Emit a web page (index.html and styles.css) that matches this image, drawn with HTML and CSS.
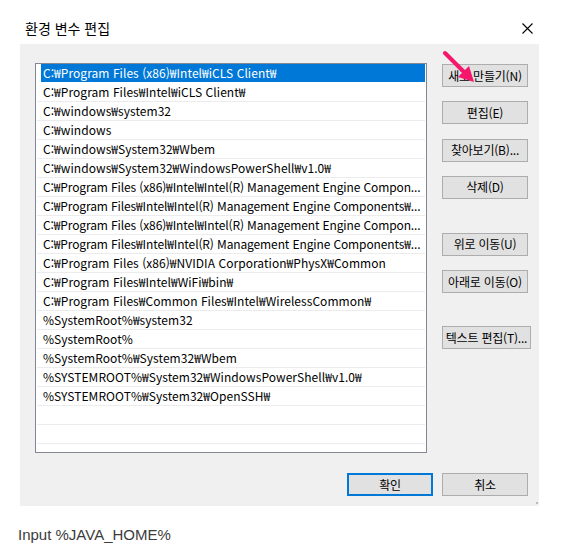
FILE: index.html
```html
<!DOCTYPE html>
<html lang="ko">
<head>
<meta charset="utf-8">
<link rel="stylesheet" href="styles.css">
</head>
<body>
<div class="page">
  <div class="titlebar">
    <span class="title">환경 변수 편집</span>
    <svg class="close" width="11" height="11" viewBox="0 0 11 11"><path d="M0.5 0.5 L10.5 10.5 M10.5 0.5 L0.5 10.5" stroke="#000" stroke-width="1.1" fill="none"/></svg>
  </div>
  <div class="panel">
    <div class="main">
      <div class="listbox">
        <div class="row selected">C:₩Program Files (x86)₩Intel₩iCLS Client₩</div>
        <div class="row">C:₩Program Files₩Intel₩iCLS Client₩</div>
        <div class="row">C:₩windows₩system32</div>
        <div class="row">C:₩windows</div>
        <div class="row">C:₩windows₩System32₩Wbem</div>
        <div class="row">C:₩windows₩System32₩WindowsPowerShell₩v1.0₩</div>
        <div class="row long">C:₩Program Files (x86)₩Intel₩Intel(R) Management Engine Compon...</div>
        <div class="row long">C:₩Program Files₩Intel₩Intel(R) Management Engine Components₩...</div>
        <div class="row long">C:₩Program Files (x86)₩Intel₩Intel(R) Management Engine Compon...</div>
        <div class="row long">C:₩Program Files₩Intel₩Intel(R) Management Engine Components₩...</div>
        <div class="row">C:₩Program Files (x86)₩NVIDIA Corporation₩PhysX₩Common</div>
        <div class="row">C:₩Program Files₩Intel₩WiFi₩bin₩</div>
        <div class="row">C:₩Program Files₩Common Files₩Intel₩WirelessCommon₩</div>
        <div class="row">%SystemRoot%₩system32</div>
        <div class="row">%SystemRoot%</div>
        <div class="row">%SystemRoot%₩System32₩Wbem</div>
        <div class="row">%SYSTEMROOT%₩System32₩WindowsPowerShell₩v1.0₩</div>
        <div class="row">%SYSTEMROOT%₩System32₩OpenSSH₩</div>
        <div class="row"></div>
        <div class="row"></div>
      </div>
      <div class="actions">
        <div class="group">
          <button class="btn new">새로 만들기(N)</button>
          <button class="btn">편집(E)</button>
          <button class="btn">찾아보기(B)...</button>
          <button class="btn">삭제(D)</button>
        </div>
        <div class="group">
          <button class="btn">위로 이동(U)</button>
          <button class="btn">아래로 이동(O)</button>
        </div>
        <div class="group">
          <button class="btn wide">텍스트 편집(T)...</button>
        </div>
        <svg class="arrow" width="40" height="40" viewBox="0 0 40 40">
          <line x1="3" y1="3" x2="22" y2="22" stroke="#f5176c" stroke-width="4" stroke-linecap="round"/>
          <polygon points="32,32 16,27 27,16" fill="#f5176c"/>
        </svg>
      </div>
    </div>
    <div class="footer">
      <button class="btn default">확인</button>
      <button class="btn">취소</button>
    </div>
    <span class="grip"></span>
  </div>
  <p class="caption">Input %JAVA_HOME%</p>
</div>
</body>
</html>
```
FILE: styles.css
```css
* { box-sizing: border-box; }
html, body { margin: 0; padding: 0; background: #fff; }
body {
  font-family: "Noto Sans CJK KR", "Noto Sans", sans-serif;
  color: #000;
}
.page { width: 572px; height: 548px; }
.titlebar {
  height: 44px;
  display: flex;
  align-items: flex-start;
  justify-content: space-between;
  padding: 0 39px 0 25px;
}
.title { font-size: 14px; line-height: 20px; margin-top: 18px; }
.close { margin-top: 23px; }
.panel {
  position: relative;
  margin-left: 20px;
  width: 519px;
  height: 462px;
  background: #f0f0f0;
  padding: 19px 11px 0 15px;
  display: flex;
  flex-direction: column;
}
.main { display: flex; align-items: flex-start; }
.listbox {
  flex: none;
  width: 392px;
  height: 390px;
  border: 1px solid #828790;
  background: #fff;
  overflow: hidden;
  padding: 0 1px;
}
.row {
  height: 19px;
  border-bottom: 1px solid #ececec;
  padding-left: 6px;
  font-size: 12px;
  line-height: 18px;
  white-space: nowrap;
  overflow: hidden;
  color: #000;
  letter-spacing: 0.05px;
}
.row.long { letter-spacing: -0.12px; }
.row.selected {
  margin-left: 4px;
  padding-left: 2px;
  background: #0078d7;
  color: #fff;
  border-bottom-color: #fff;
}
.actions {
  position: relative;
  flex: none;
  margin-left: 15px;
  display: flex;
  flex-direction: column;
  margin-top: 1px;
}
.group { display: flex; flex-direction: column; gap: 14.33px; }
.group + .group { margin-top: 34px; }
.group:last-of-type { margin-top: 33px; }
.btn {
  width: 86px;
  height: 23px;
  background: #e1e1e1;
  border: 1px solid #adadad;
  font-family: "Noto Sans CJK KR", "Noto Sans", sans-serif;
  font-size: 12px;
  line-height: 20px;
  color: #000;
  padding: 0;
  margin: 0;
  white-space: nowrap;
  letter-spacing: -0.2px;
}
.btn.wide { width: 89px; }
.arrow { position: absolute; left: 0; top: -14px; }
.footer {
  display: flex;
  justify-content: flex-end;
  gap: 9px;
  margin-top: 20px;
}
.btn.default { border: 2px solid #0078d7; }
.grip {
  position: absolute;
  right: 1px;
  bottom: 2px;
  width: 2px;
  height: 2px;
  background: #bcbcbc;
}
.caption {
  margin: 19px 0 0 18px;
  font-family: "Liberation Sans", Arial, sans-serif;
  font-size: 15px;
  line-height: 20px;
  color: #3c3c3c;
}
```
